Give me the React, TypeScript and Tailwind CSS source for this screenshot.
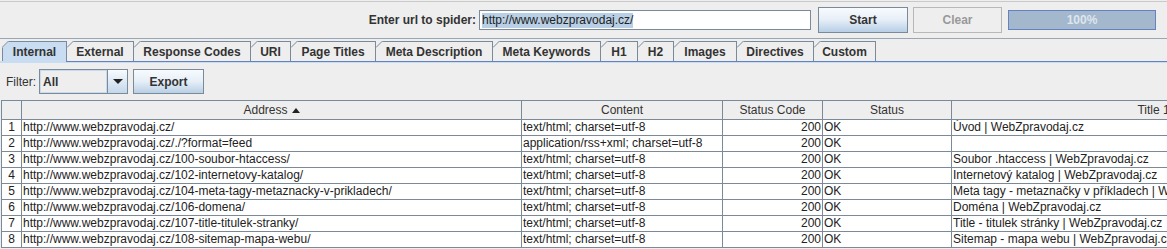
import React from "react";

const tabs = [
  { label: "Internal", w: "w-[65px]", selected: true },
  { label: "External", w: "w-[67px]" },
  { label: "Response Codes", w: "w-[117px]" },
  { label: "URI", w: "w-[40px]" },
  { label: "Page Titles", w: "w-[85px]" },
  { label: "Meta Description", w: "w-[117px]" },
  { label: "Meta Keywords", w: "w-[108px]" },
  { label: "H1", w: "w-[37px]" },
  { label: "H2", w: "w-[36px]" },
  { label: "Images", w: "w-[63px]" },
  { label: "Directives", w: "w-[77px]" },
  { label: "Custom", w: "w-[62px]" },
];

const base = "http://www.webzpravodaj.cz/";
const rows = [
  { url: "", content: "text/html; charset=utf-8", title: "Úvod | WebZpravodaj.cz" },
  { url: "./?format=feed", content: "application/rss+xml; charset=utf-8", title: "" },
  { url: "100-soubor-htaccess/", content: "text/html; charset=utf-8", title: "Soubor .htaccess | WebZpravodaj.cz" },
  { url: "102-internetovy-katalog/", content: "text/html; charset=utf-8", title: "Internetový katalog | WebZpravodaj.cz" },
  { url: "104-meta-tagy-metaznacky-v-prikladech/", content: "text/html; charset=utf-8", title: "Meta tagy - metaznačky v příkladech | WebZpravodaj.cz" },
  { url: "106-domena/", content: "text/html; charset=utf-8", title: "Doména | WebZpravodaj.cz" },
  { url: "107-title-titulek-stranky/", content: "text/html; charset=utf-8", title: "Title - titulek stránky | WebZpravodaj.cz" },
  { url: "108-sitemap-mapa-webu/", content: "text/html; charset=utf-8", title: "Sitemap - mapa webu | WebZpravodaj.cz" },
];

function Tab({ tab, first }: any) {
  return (
    <div
      className={`relative h-[20px] ${tab.w} shrink-0 border-t border-r border-[#7a8a99] ${first ? "border-l" : ""} ${
        tab.selected ? "bg-[#c8ddf2]" : "bg-[#eeeeee]"
      } flex items-center justify-center font-bold text-[12px] text-[#333333]`}
    >
      {/* folded corner */}
      <svg
        className={`absolute top-[-1px] ${first ? "left-[-1px]" : "left-0"}`}
        width="7"
        height="7"
        viewBox="0 0 7 7"
      >
        <polygon points="0,0 7,0 0,7" fill="#eeeeee" />
        <line x1="0" y1="6.5" x2="6.5" y2="0" stroke="#7a8a99" strokeWidth="1" />
      </svg>
      {tab.label}
    </div>
  );
}

function App() {
  return (
    <div
      className="h-[249px] w-full overflow-hidden bg-[#eeeeee] text-[#333333]"
      style={{ fontFamily: '"Liberation Sans", Arial, sans-serif' }}
    >
      <div className="h-px mt-px bg-[#c9c9c9]" />

      {/* url bar */}
      <div className="flex h-[36px] items-center justify-end pr-[11px] text-[12px]">
        <span className="font-bold mr-[3px]">Enter url to spider:</span>
        <div className="h-[20px] w-[332px] border border-[#7a8a99] bg-white flex items-center pl-[2px]">
          <span className="bg-[#b8cfe5] leading-[15px] text-[#222222]">http://www.webzpravodaj.cz/</span>
        </div>
        <button className="ml-[7px] h-[26px] w-[90px] border border-[#7a8a99] bg-linear-to-b from-[#f8fbfe] via-[#e6eef7] to-[#b8cfe5] font-bold">
          Start
        </button>
        <button className="ml-[5px] h-[26px] w-[89px] border border-[#b8b8b8] bg-[#eeeeee] font-bold text-[#999999]">
          Clear
        </button>
        <div className="ml-[6px] h-[20px] w-[148px] border border-[#6382bf] bg-[#a3b8cc] flex items-center justify-center font-bold text-[#dde5ee]">
          100%
        </div>
      </div>
      <div className="h-px bg-[#9aa6b3]" />

      {/* tabs */}
      <div className="flex pl-[2px] pt-[2px]">
        {tabs.map((t, i) => (
          <Tab key={t.label} tab={t} first={i === 0} />
        ))}
      </div>
      <div className="flex h-px">
        <div className="w-[66px] bg-[#c8ddf2]" />
        <div className="flex-1 bg-[#6382bf]" />
      </div>
      <div className="h-px bg-[#c8ddf2]" />

      {/* filter row */}
      <div className="flex items-center h-[25px] mt-[6px] pl-[6px] text-[12px]">
        <span>Filter:</span>
        <div className="ml-[3px] flex h-[25px] w-[89px] border border-[#7a8a99]">
          <div className="flex-1 border border-[#c8daed] bg-[#eeeeee] flex items-center pl-[2px] font-bold">All</div>
          <div className="w-[20px] border-l border-[#7a8a99] bg-linear-to-b from-[#f8fbfe] to-[#c4d7ea] flex items-center justify-center">
            <svg width="10" height="6" viewBox="0 0 10 6">
              <polygon points="0,0 10,0 5,5" fill="#222222" />
            </svg>
          </div>
        </div>
        <button className="ml-[5px] h-[25px] w-[71px] border border-[#7a8a99] bg-linear-to-b from-[#f8fbfe] via-[#e6eef7] to-[#b8cfe5] font-bold">
          Export
        </button>
      </div>

      {/* table */}
      <div className="mt-[6px] ml-px w-[1400px] border-t border-l border-[#7a8a99] text-[12px]">
        <div className="flex h-[19px] bg-[#eeeeee] border-b border-[#7a8a99] text-[#333333]">
          <div className="w-[20px] border-r border-[#7a8a99]" />
          <div className="w-[500px] border-r border-[#7a8a99] flex items-center justify-center gap-[4px]">
            Address
            <svg width="8" height="5" viewBox="0 0 8 5">
              <polygon points="0,5 8,5 4,0" fill="#222222" />
            </svg>
          </div>
          <div className="w-[201px] border-r border-[#7a8a99] flex items-center justify-center">Content</div>
          <div className="w-[100px] border-r border-[#7a8a99] flex items-center justify-center">Status Code</div>
          <div className="w-[129px] border-r border-[#7a8a99] flex items-center justify-center">Status</div>
          <div className="w-[404px] border-r border-[#7a8a99] flex items-center justify-center whitespace-nowrap">Title 1</div>
        </div>
        {rows.map((r, i) => (
          <div key={i} className="flex h-[16px] bg-white border-b border-[#7a8a99] text-[#222222] leading-[15px]">
            <div className="w-[20px] border-r border-[#7a8a99] text-center">{i + 1}</div>
            <div className="w-[500px] border-r border-[#7a8a99] pl-px whitespace-nowrap overflow-hidden">{base + r.url}</div>
            <div className="w-[201px] border-r border-[#7a8a99] pl-px whitespace-nowrap overflow-hidden">{r.content}</div>
            <div className="w-[100px] border-r border-[#7a8a99] pr-px text-right">200</div>
            <div className="w-[129px] border-r border-[#7a8a99] pl-px">OK</div>
            <div className="w-[404px] border-r border-[#7a8a99] pl-px whitespace-nowrap overflow-hidden">{r.title}</div>
          </div>
        ))}
      </div>
    </div>
  );
}

export default App;
